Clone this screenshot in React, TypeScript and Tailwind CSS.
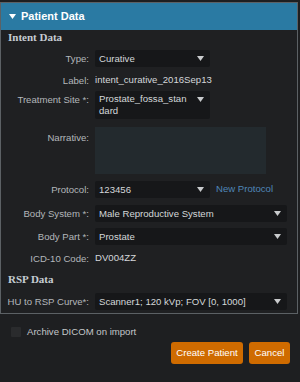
import type { ReactNode } from 'react'

const FONT = { fontFamily: '"Liberation Sans", Arial, sans-serif' }
const SERIF = { fontFamily: '"Liberation Serif", "Times New Roman", serif' }

function Caret({ className = '' }: { className?: string }) {
  return (
    <svg width="7" height="5" viewBox="0 0 7 5" className={className}>
      <polygon points="0,0 7,0 3.5,5" fill="currentColor" />
    </svg>
  )
}

function Select({ value, width }: { value: string; width: string }) {
  return (
    <div className={`flex h-[17px] items-center ${width} justify-between rounded-[2px] bg-[#161719] pl-[4px] pr-[6px]`}>
      <span className="leading-[12px] text-[#d4d7da]">{value}</span>
      <Caret className="shrink-0 text-[#c9cbcd]" />
    </div>
  )
}

function Row({ label, children, labelPad = '', className = '' }: { label: string; children: ReactNode; labelPad?: string; className?: string }) {
  return (
    <div className={`flex ${labelPad ? 'items-start' : 'items-center'} ${className}`}>
      <div className={`w-[89px] shrink-0 pr-[1px] text-right leading-[12px] text-[#b3b7bb] ${labelPad}`}>{label}</div>
      <div className="ml-[5px] flex items-center">{children}</div>
    </div>
  )
}

function SectionTitle({ children, className = '' }: { children: ReactNode; className?: string }) {
  return (
    <div className={`h-[13px] pl-[7px] text-[11px] font-bold leading-[13px] text-[#c6cdd3] ${className}`} style={SERIF}>
      {children}
    </div>
  )
}

export default function App() {
  return (
    <div className="h-[382px] w-[300px] bg-[#1e1f21] pt-[2px] text-[9.6px]" style={FONT}>
      <div className="w-[298px] border border-[#5c6165] bg-[#1f2022] pb-[3px]">
        <div className="flex h-[27px] items-center bg-[#2a7aa3] pl-[8px]">
          <Caret className="text-white" />
          <span className="ml-[5px] text-[11px] font-bold text-white">Patient Data</span>
        </div>

        <SectionTitle className="mt-[1px]">Intent Data</SectionTitle>

        <Row label="Type:" className="mt-[6px]">
          <Select value="Curative" width="w-[115px]" />
        </Row>
        <Row label="Label:" className="mt-[5px] h-[17px]">
          <span className="text-[#d4d7da]">intent_curative_2016Sep13</span>
        </Row>
        <Row label="Treatment Site *:" labelPad="pt-[3px]" className="mt-[2px]">
          <div className="flex h-[28px] w-[115px] items-start justify-between rounded-[2px] bg-[#161719] pl-[4px] pr-[6px] pt-[2px]">
            <span className="w-[92px] break-all leading-[12px] text-[#d4d7da]">Prostate_fossa_standard</span>
            <Caret className="mt-[4px] shrink-0 text-[#c9cbcd]" />
          </div>
        </Row>
        <Row label="Narrative:" labelPad="pt-[5px]" className="mt-[8px]">
          <div className="h-[47px] w-[171px] bg-[#232a2e]" />
        </Row>
        <Row label="Protocol:" className="mt-[7px]">
          <Select value="123456" width="w-[115px]" />
          <span className="ml-[6px] text-[#4f86b8]">New Protocol</span>
        </Row>
        <Row label="Body System *:" className="mt-[7px]">
          <Select value="Male Reproductive System" width="w-[192px]" />
        </Row>
        <Row label="Body Part *:" className="mt-[6px]">
          <Select value="Prostate" width="w-[192px]" />
        </Row>
        <Row label="ICD-10 Code:" className="mt-[5px] h-[17px]">
          <span className="text-[#d4d7da]">DV004ZZ</span>
        </Row>

        <SectionTitle className="mt-[6px]">RSP Data</SectionTitle>

        <Row label="HU to RSP Curve*:" className="mt-[7px]">
          <Select value="Scanner1; 120 kVp; FOV [0, 1000]" width="w-[192px]" />
        </Row>
      </div>

      <div className="mt-[11px] flex items-center pl-[11px]">
        <div className="h-[10px] w-[10px] rounded-[1px] bg-[#2a2b2d]" />
        <span className="ml-[6px] text-[#c3c6c9]">Archive DICOM on import</span>
      </div>

      <div className="mt-[3px] flex justify-end gap-[6px] pr-[10px]">
        <button className="h-[22px] w-[72px] rounded-[3px] bg-[#cf6b00] text-[9.6px] text-white">Create Patient</button>
        <button className="h-[22px] w-[41px] rounded-[3px] bg-[#cf6b00] text-[9.6px] text-white">Cancel</button>
      </div>
    </div>
  )
}
